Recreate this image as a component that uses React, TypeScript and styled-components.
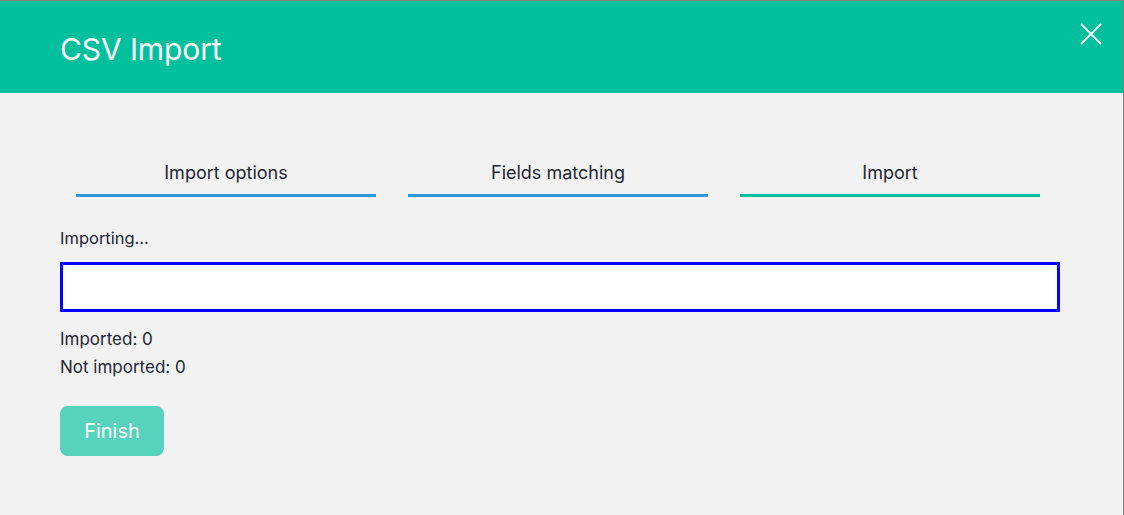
import React from "react";
import styled, { createGlobalStyle } from "styled-components";

const Global = createGlobalStyle`
  html, body { margin: 0; padding: 0; }
  body { background: #f2f2f2; font-family: Inter, "Noto Sans", sans-serif; color: #1f2633; }
  * { box-sizing: border-box; }
`;

const Frame = styled.div`
  width: 1124px;
  height: 515px;
  border-top: 1px solid #7f7f7f;
  border-right: 1px solid #7f7f7f;
  background: #f2f2f2;
  display: flex;
  flex-direction: column;
  overflow: hidden;
`;

const Header = styled.header`
  height: 92px;
  background: #00bf9d;
  display: flex;
  align-items: center;
  justify-content: space-between;
  padding: 4px 20px 0 60px;
  position: relative;
`;

const Title = styled.h1`
  margin: 0;
  font-size: 30px;
  font-weight: 400;
  color: #ffffff;
  letter-spacing: -0.1px;
`;

const Close = styled.button`
  position: absolute;
  top: 20px;
  right: 19px;
  width: 26px;
  height: 26px;
  padding: 0;
  border: none;
  background: transparent;
  cursor: pointer;
  display: flex;
`;

const Body = styled.main`
  padding: 68px 63px 0 60px;
  display: flex;
  flex-direction: column;
`;

const Tabs = styled.nav`
  display: grid;
  grid-template-columns: repeat(3, 300px);
  column-gap: 32px;
  padding: 0 16px;
`;

const Tab = styled.div<{ $active?: boolean }>`
  text-align: center;
  font-size: 18px;
  line-height: 24px;
  padding-bottom: 9px;
  border-bottom: 3px solid ${(p) => (p.$active ? "#00bf9d" : "#3498db")};
`;

const Status = styled.p`
  margin: 29px 0 12px;
  font-size: 16.5px;
  line-height: 24px;
`;

const Progress = styled.div`
  width: 1000px;
  height: 50px;
  border: 3px solid #0000ff;
  background: #ffffff;
`;

const Stats = styled.div`
  margin-top: 13px;
  display: flex;
  flex-direction: column;
  font-size: 17px;
  line-height: 28px;
`;

const Finish = styled.button`
  margin-top: 25px;
  width: 104px;
  height: 50px;
  border: none;
  border-radius: 8px;
  background: #55d3bc;
  color: #ffffff;
  font-family: inherit;
  font-size: 20px;
  align-self: flex-start;
`;

export default function App() {
  return (
    <>
      <Global />
      <Frame>
        <Header>
          <Title>CSV Import</Title>
          <Close aria-label="Close">
            <svg width="26" height="26" viewBox="0 0 26 26">
              <path d="M3 3 L23 23 M23 3 L3 23" stroke="#ffffff" strokeWidth="1.8" />
            </svg>
          </Close>
        </Header>
        <Body>
          <Tabs>
            <Tab>Import options</Tab>
            <Tab>Fields matching</Tab>
            <Tab $active>Import</Tab>
          </Tabs>
          <Status>Importing...</Status>
          <Progress />
          <Stats>
            <span>Imported: 0</span>
            <span>Not imported: 0</span>
          </Stats>
          <Finish disabled>Finish</Finish>
        </Body>
      </Frame>
    </>
  );
}
